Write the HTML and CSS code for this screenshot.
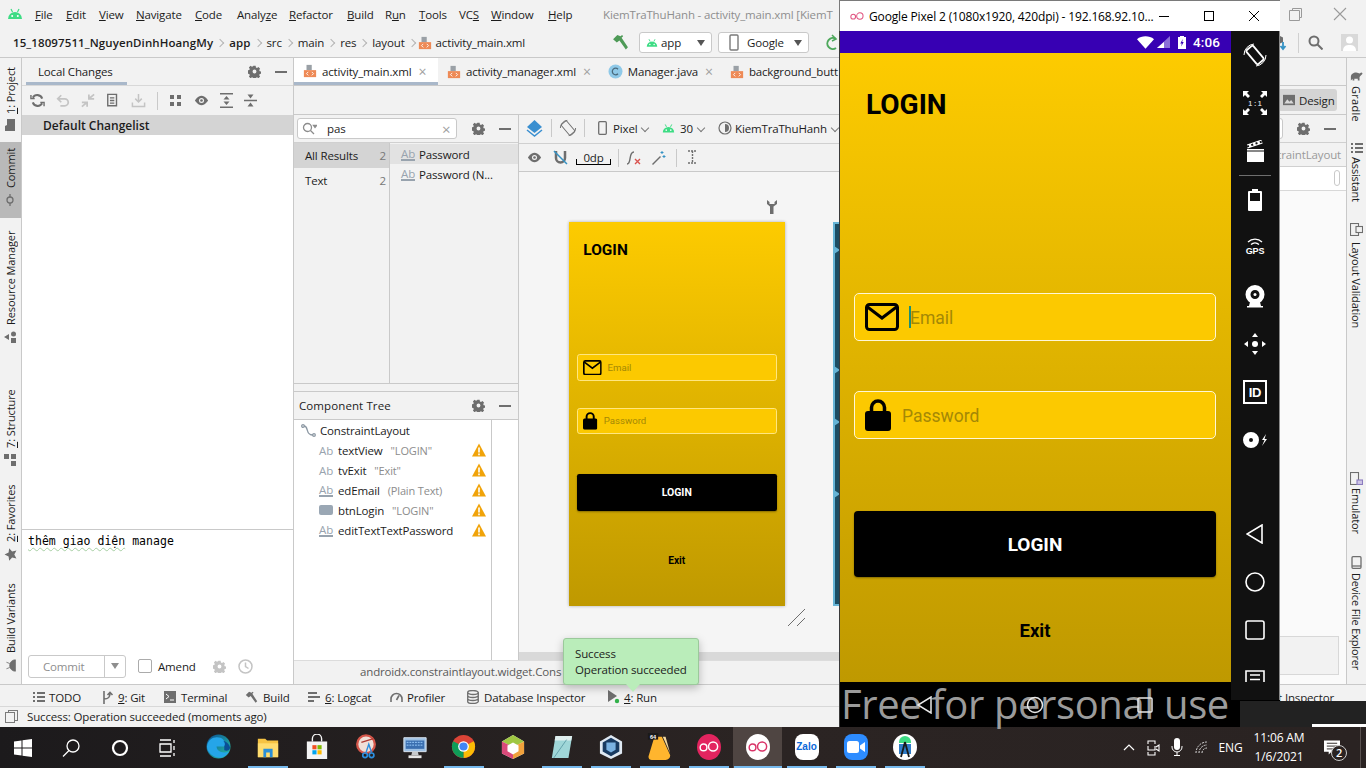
FILE: index.html
```html
<!DOCTYPE html>
<html lang="en">

<head>
    <meta charset="UTF-8">
    <meta name="viewport" content="width=device-width, initial-scale=1.0">
    <title>Android Studio with emulator</title>
    <link rel="stylesheet" href="styles.css">
</head>

<body>
    <!-- shared icons -->
    <svg class="defs" aria-hidden="true">
        <symbol id="i-gear" viewBox="0 0 16 16"><path d="M6.600 1h2.800l.4 2 1.300.6 1.800-1.100 2 2-1.100 1.800.6 1.300 2 .4v2.800l-2 .4-.6 1.300 1.100 1.800-2 2-1.800-1.100-1.300.6-.4 2H6.600l-.4-2-1.300-.6-1.800 1.100-2-2 1.100-1.800-.6-1.300-2-.4V6.600l2-.4.6-1.300L1.100 3l2-2 1.800 1.100 1.300-.6zM8 5.600A2.400 2.400 0 1 0 8 10.400 2.400 2.400 0 0 0 8 5.600z" fill-rule="evenodd"/></symbol>
        <symbol id="i-warn" viewBox="0 0 14 14"><path d="M7 .5 14 13.500H0z" fill="#f0a30a"/><path d="M6.200 4.500h1.600v5H6.200zM6.200 10.500h1.600v1.700H6.200z" fill="#fff"/></symbol>
        <symbol id="i-android" viewBox="0 0 16 16"><path d="M1 13a7 7 0 0 1 14 0z" fill="#3ddc84"/><path d="M4 3 5.500 6M12 3l-1.500 3" stroke="#3ddc84" stroke-width="1.200"/><circle cx="5.200" cy="10" r="1" fill="#fff"/><circle cx="10.800" cy="10" r="1" fill="#fff"/></symbol>
        <symbol id="i-xml" viewBox="0 0 16 16"><path d="M4 1h6v6H4z" fill="#9aa0a6"/><path d="M1 7h14v8H1z" fill="#ee8a56"/><path d="M6 9 4 11l2 2M10 9l2 2-2 2" stroke="#fff" fill="none"/></symbol>
        <symbol id="i-mail" viewBox="0 0 34 28"><rect x="1.500" y="1.500" width="31" height="25" rx="3" fill="none" stroke="#000" stroke-width="3"/><path d="M2.500 4 17 15 31.500 4" fill="none" stroke="#000" stroke-width="3"/></symbol>
        <symbol id="i-lock" viewBox="0 0 26 32"><path d="M6.500 13V8.500a6.500 6.500 0 0 1 13 0V13" fill="none" stroke="#000" stroke-width="3.500"/><path d="M3 12h20a3 3 0 0 1 3 3v14a3 3 0 0 1-3 3H3a3 3 0 0 1-3-3V15a3 3 0 0 1 3-3z"/></symbol>
        <symbol id="i-oo" viewBox="0 0 22 12"><circle cx="5" cy="7" r="3.700" fill="none" stroke="currentColor" stroke-width="1.600"/><circle cx="15.500" cy="6" r="5" fill="none" stroke="currentColor" stroke-width="1.600"/></symbol>
    </svg>

    <div class="desktop">
        <div class="ide">
            <header class="menubar">
                <svg class="menu-logo" width="16" height="16"><use href="#i-android"/></svg>
                <span><u>F</u>ile</span>
                <span><u>E</u>dit</span>
                <span><u>V</u>iew</span>
                <span><u>N</u>avigate</span>
                <span><u>C</u>ode</span>
                <span>Analy<u>z</u>e</span>
                <span><u>R</u>efactor</span>
                <span><u>B</u>uild</span>
                <span>R<u>u</u>n</span>
                <span><u>T</u>ools</span>
                <span>VC<u>S</u></span>
                <span><u>W</u>indow</span>
                <span><u>H</u>elp</span>
                <span class="menu-title">KiemTraThuHanh - activity_main.xml [KiemT</span>
                <div class="ide-controls">
                    <svg width="14" height="14" viewBox="0 0 14 14" fill="none" stroke="#9a9a9a"><path d="M3.500 3.500v-2h9v9h-2M.5 3.500h10v10H.5z"/></svg>
                    <svg width="14" height="14" viewBox="0 0 14 14" stroke="#9a9a9a" stroke-width="1.100"><path d="m1 1 12 12M13 1 1 13"/></svg>
                </div>
            </header>

            <nav class="navbar">
                <div class="crumbs">
                    <b>15_18097511_NguyenDinhHoangMy</b><i></i>
                    <b>app</b><i></i>
                    <span>src</span><i></i>
                    <span>main</span><i></i>
                    <span>res</span><i></i>
                    <span>layout</span><i></i>
                    <svg width="14" height="14"><use href="#i-xml"/></svg>
                    <span>activity_main.xml</span>
                </div>
                <div class="run-tools">
                    <svg width="17" height="17" viewBox="0 0 16 16" fill="#4e9a57"><path d="M1 5 5 1l3 1 1.500-1 1 1L9 3.500l6 9-2 2-6-8.500-2.500 2z"/></svg>
                    <div class="combo combo-app">
                        <svg width="12" height="12"><use href="#i-android"/></svg>
                        <span>app</span><i class="caret"></i>
                    </div>
                    <div class="combo combo-device">
                        <svg width="10" height="17" viewBox="0 0 10 17" fill="none" stroke="#7a7a7a" stroke-width="1.400"><rect x="1" y="1" width="8" height="15" rx="1"/></svg>
                        <span>Google</span><i class="caret"></i>
                    </div>
                    <svg width="16" height="18" viewBox="0 0 16 18" fill="none" stroke="#4ea95c" stroke-width="2"><path d="M13 5A5.500 5.500 0 1 0 13 14"/><path d="m9 1 4 4-4 2" stroke-width="1.500"/></svg>
                </div>
                <div class="nav-right">
                    <svg width="16" height="17" viewBox="0 0 16 17"><path d="M7 1 12 3.500V8L7 10.500 2 8V3.500z" fill="#6e6e6e"/><path d="M12 8v6M9.500 12l2.500 3 2.500-3" stroke="#3592c4" stroke-width="1.800" fill="none"/></svg>
                    <i class="nav-sep"></i>
                    <svg width="15" height="15" viewBox="0 0 15 15" fill="none" stroke="#6e6e6e" stroke-width="2"><circle cx="6" cy="6" r="4.500"/><path d="m9.500 9.500 5 5"/></svg>
                    <svg class="avatar" width="17" height="17" viewBox="0 0 17 17"><path fill="#d9d9d9" d="M0 0h17v17H0z"/><circle cx="8.500" cy="6" r="3.500" fill="#fff"/><path d="M2 17c0-5 3-6 6.500-6s6.500 1 6.500 6z" fill="#fff"/></svg>
                </div>
            </nav>

            <div class="workspace">
                <aside class="stripe stripe-left">
                    <div class="stripe-item si-project"><svg width="12" height="12" viewBox="0 0 12 12" fill="#6e6e6e"><path d="M0 1h5l1 2h6v8H0z"/></svg><span><u>1</u>: Project</span></div>
                    <div class="stripe-item si-commit"><svg width="12" height="12" viewBox="0 0 12 12" fill="none" stroke="#6e6e6e" stroke-width="1.300"><circle cx="6" cy="6" r="3"/><path d="M0 6h3M9 6h3"/></svg><span>Commit</span></div>
                    <div class="stripe-item si-resource"><svg width="12" height="12" viewBox="0 0 12 12" fill="#6e6e6e"><path d="M6 0 9 5H3zM0 7h5v5H0z"/><circle cx="9" cy="9.500" r="2.500"/></svg><span>Resource Manager</span></div>
                    <div class="stripe-item si-structure"><svg width="12" height="12" viewBox="0 0 12 12" fill="#6e6e6e"><path d="M0 7h5v5H0zM7 7h5v5H7zM7 0h5v5H7z"/></svg><span><u>7</u>: Structure</span></div>
                    <div class="stripe-item si-favorites"><svg width="13" height="13" viewBox="0 0 24 24" fill="#6e6e6e"><path d="m12 1 3.500 7.500 8 1-6 5.500 1.700 8L12 19l-7.200 4 1.700-8-6-5.500 8-1z"/></svg><span><u>2</u>: Favorites</span></div>
                    <div class="stripe-item si-variants"><svg width="13" height="13" viewBox="0 0 16 16" fill="#6e6e6e"><path d="M1 14a7 7 0 0 1 14 0zM4 3l1.500 4M12 3l-1.500 4" stroke="#6e6e6e"/></svg><span>Build Variants</span></div>
                </aside>

                <section class="commit-panel">
                    <div class="panel-head">
                        <div class="panel-tab">Local Changes</div>
                        <svg class="gear" width="13" height="13"><use href="#i-gear"/></svg>
                        <i class="minus"></i>
                    </div>
                    <div class="commit-tools">
                        <svg width="15" height="15" viewBox="0 0 16 16" fill="none" stroke="#6e6e6e" stroke-width="2.200"><path d="M13 6a5.500 5.500 0 0 0-10-1M3 10a5.500 5.500 0 0 0 10 1"/><path d="M1 2v4h4M15 14v-4h-4" stroke-width="1.500"/></svg>
                        <svg width="14" height="15" viewBox="0 0 16 16" fill="none" stroke="#c4c4c4" stroke-width="2"><path d="M3 6h7a4 4 0 0 1 0 8H5M6 2 2 6l4 4"/></svg>
                        <svg width="14" height="15" viewBox="0 0 16 16" fill="none" stroke="#c4c4c4" stroke-width="2"><path d="M1 10h6v5M15 6H9V1M1 15l6-5M15 1 9 6"/></svg>
                        <svg width="14" height="15" viewBox="0 0 16 16" fill="none" stroke="#6e6e6e" stroke-width="1.600"><path d="M2 1h10v13H2zM4.500 5h5M4.500 8h5M4.500 11h5"/></svg>
                        <svg width="15" height="15" viewBox="0 0 16 16" fill="none" stroke="#c4c4c4" stroke-width="1.600"><path d="M8 1v8M4.500 6 8 9.500 11.500 6M1.500 10v4.500h13V10"/></svg>
                        <i class="tool-sep"></i>
                        <svg width="14" height="14" viewBox="0 0 14 14" fill="#6e6e6e"><path d="M1 1h4v4H1zM8 1h4v4H8zM1 8h4v4H1zM8 8h4v4H8z"/></svg>
                        <svg width="15" height="15" viewBox="0 0 16 16" fill="#6e6e6e"><path d="M1 8s3-5 7-5 7 5 7 5-3 5-7 5-7-5-7-5z"/><circle cx="8" cy="8" r="2.700" fill="#f2f2f2"/><circle cx="8" cy="8" r="1.400"/></svg>
                        <svg width="13" height="15" viewBox="0 0 13 15" fill="#6e6e6e"><path d="M0 0h13v1.500H0zM0 13.500h13V15H0zM6.500 3 9.500 6.500h-6zM6.500 12l-3-3.500h6z"/></svg>
                        <svg width="13" height="15" viewBox="0 0 13 15" fill="#6e6e6e"><path d="M0 6.800h13v1.500H0zM6.500 5.500l-3-4h6zM6.500 9.500l3 4h-6z"/></svg>
                    </div>
                    <div class="changelist">Default Changelist</div>
                    <div class="changes-empty"></div>
                    <div class="commit-message"><span>thêm giao diện</span> manage</div>
                    <div class="commit-actions">
                        <div class="commit-button"><span>Commit</span><div class="commit-drop"><i class="caret"></i></div></div>
                        <label class="amend"><i></i>Amend</label>
                        <svg class="gear-light" width="13" height="13"><use href="#i-gear"/></svg>
                        <svg width="15" height="15" viewBox="0 0 15 15" fill="none" stroke="#c4c4c4" stroke-width="1.500"><circle cx="7.500" cy="7.500" r="6.500"/><path d="M7.500 3.500v4l3 2"/></svg>
                    </div>
                </section>

                <section class="editor">
                    <div class="file-tabs">
                        <div class="file-tab active"><svg width="14" height="14"><use href="#i-xml"/></svg><span>activity_main.xml</span><em>×</em></div>
                        <div class="file-tab"><svg width="14" height="14"><use href="#i-xml"/></svg><span>activity_manager.xml</span><em>×</em></div>
                        <div class="file-tab"><svg width="15" height="15" viewBox="0 0 15 15"><circle cx="7.500" cy="7.500" r="7" fill="#8fc9e8"/><path d="M10 5.200a3.300 3.300 0 1 0 0 4.600" fill="none" stroke="#4a6a7c" stroke-width="1.300"/></svg><span>Manager.java</span><em>×</em></div>
                        <div class="file-tab"><svg width="14" height="14"><use href="#i-xml"/></svg><span>background_butt</span></div>
                    </div>
                    <div class="mode-bar">
                        <div class="mode-button"><svg width="12" height="12" viewBox="0 0 14 12"><path d="M0 0h14v12H0z" fill="#6e6e6e"/><path d="m1.500 10 3.500-5 2.500 3 2-2 3 4z" fill="#d8d8d8"/></svg>Design</div>
                    </div>

                    <div class="editor-body">
                        <div class="editor-left">
                            <div class="editor-split">
                                <div class="side-pane">
                                    <div class="palette">
                                        <div class="palette-search">
                                            <div class="search-box">
                                                <svg width="15" height="13" viewBox="0 0 15 13" fill="none" stroke="#8c8c8c" stroke-width="1.300"><circle cx="5.500" cy="5.500" r="4"/><path d="m8.500 8.500 3.500 3.500M11.500 3.500h3l-1.500 2z"/></svg>
                                                <span>pas</span>
                                                <em>×</em>
                                            </div>
                                            <svg class="gear" width="13" height="13"><use href="#i-gear"/></svg>
                                            <i class="minus"></i>
                                        </div>
                                        <div class="palette-lists">
                                            <ul class="palette-groups">
                                                <li class="current"><span>All Results</span><b>2</b></li>
                                                <li><span>Text</span><b>2</b></li>
                                            </ul>
                                            <ul class="palette-items">
                                                <li class="current"><i class="ab ab-line">Ab</i>Password</li>
                                                <li><i class="ab ab-line">Ab</i>Password (N...</li>
                                            </ul>
                                        </div>
                                    </div>
                                    <div class="split-bar"></div>
                                    <div class="tree-head">
                                        <span>Component Tree</span>
                                        <svg class="gear" width="13" height="13"><use href="#i-gear"/></svg>
                                        <i class="minus"></i>
                                    </div>
                                    <div class="tree">
                                        <ul class="tree-list">
                                            <li class="tree-root"><svg width="15" height="15" viewBox="0 0 15 15" fill="none" stroke="#8c98a3" stroke-width="1.300"><circle cx="2" cy="3" r="1.300"/><circle cx="13" cy="12" r="1.300"/><path d="M3 3c5 0 1 9 9 9"/></svg>ConstraintLayout</li>
                                            <li><i class="ab">Ab</i><span>textView</span><small>"LOGIN"</small><svg width="14" height="14"><use href="#i-warn"/></svg></li>
                                            <li><i class="ab">Ab</i><span>tvExit</span><small>"Exit"</small><svg width="14" height="14"><use href="#i-warn"/></svg></li>
                                            <li><i class="ab ab-line">Ab</i><span>edEmail</span><small>(Plain Text)</small><svg width="14" height="14"><use href="#i-warn"/></svg></li>
                                            <li><i class="btn-chip"></i><span>btnLogin</span><small>"LOGIN"</small><svg width="14" height="14"><use href="#i-warn"/></svg></li>
                                            <li><i class="ab ab-line">Ab</i><span>editTextTextPassword</span><svg width="14" height="14"><use href="#i-warn"/></svg></li>
                                        </ul>
                                        <div class="tree-gutter"></div>
                                    </div>
                                </div>

                                <div class="design-main">
                                    <div class="design-tools first">
                                        <svg width="17" height="19" viewBox="0 0 17 19"><path d="M8.500 1 16 8l-7.500 6L1 8z" fill="#3a8fd0"/><path d="m1 11 7.500 6 7.500-6" fill="none" stroke="#3a8fd0" stroke-width="1.500"/></svg>
                                        <i class="tool-sep"></i>
                                        <svg width="18" height="18" viewBox="0 0 26 26" fill="none" stroke="#6e6e6e" stroke-width="1.400"><rect x="8" y="3" width="10" height="20" rx="1.500" transform="rotate(-40 13 13)"/><path d="M2 13A11 11 0 0 1 12 2M24 13a11 11 0 0 1-10 11"/></svg>
                                        <i class="tool-sep"></i>
                                        <svg width="9" height="14" viewBox="0 0 9 14" fill="none" stroke="#6e6e6e" stroke-width="1.300"><rect x=".7" y=".7" width="7.600" height="12.600" rx="1"/></svg>
                                        <span>Pixel<i class="chev"></i></span>
                                        <svg width="13" height="13"><use href="#i-android"/></svg>
                                        <span>30<i class="chev"></i></span>
                                        <svg width="14" height="14" viewBox="0 0 14 14"><circle cx="7" cy="7" r="6" fill="none" stroke="#6e6e6e" stroke-width="1.200"/><path d="M7 3a4 4 0 0 1 0 8z" fill="#6e6e6e"/></svg>
                                        <span>KiemTraThuHanh<i class="chev"></i></span>
                                    </div>
                                    <div class="design-tools second">
                                        <svg width="15" height="15" viewBox="0 0 16 16" fill="#6e6e6e"><path d="M1 8s3-5 7-5 7 5 7 5-3 5-7 5-7-5-7-5z"/><circle cx="8" cy="8" r="2.700" fill="#f2f2f2"/><circle cx="8" cy="8" r="1.400"/></svg>
                                        <svg width="15" height="15" viewBox="0 0 15 15"><path d="M3 1v7a4.500 4.500 0 0 0 9 0V1" fill="none" stroke="#6e6e6e" stroke-width="2.500"/><path d="m1 1 13 13" stroke="#3592c4" stroke-width="1.500"/></svg>
                                        <span class="margin-box">0dp</span>
                                        <i class="tool-sep"></i>
                                        <svg width="16" height="16" viewBox="0 0 16 16" fill="none" stroke="#6e6e6e" stroke-width="1.400"><path d="M1 14c5 0 1-12 7-12"/><path d="m9 9 5 5M14 9l-5 5" stroke="#d9534f"/></svg>
                                        <svg width="15" height="15" viewBox="0 0 15 15"><path d="m1 14 8-8 1 1-8 8z" fill="#6e6e6e"/><path d="M11 1v3M9.500 2.500h3M13 5v3M11.500 6.500h3" stroke="#3592c4"/></svg>
                                        <i class="tool-sep"></i>
                                        <svg width="13" height="15" viewBox="0 0 13 15" fill="none" stroke="#6e6e6e" stroke-width="1.400"><path d="M2 1h9M2 13h9M6.500 1v12" stroke-dasharray="2 1"/></svg>
                                    </div>

                                    <div class="canvas">
                                        <div class="preview">
                                            <svg class="wrench" width="10" height="14" viewBox="0 0 10 14" fill="#6e6e6e"><path d="M0 0v4l3 2.500V14h3.500V6.500L10 4V0L7.500 2v2h-5V2z"/></svg>
                                            <div class="login-screen mini">
                                                <div class="login-title">LOGIN</div>
                                                <div class="login-field first"><svg class="mail"><use href="#i-mail"/></svg><span>Email</span></div>
                                                <div class="login-field second"><svg class="lock"><use href="#i-lock"/></svg><span>Password</span></div>
                                                <div class="login-button">LOGIN</div>
                                                <div class="login-exit">Exit</div>
                                            </div>
                                            <svg class="resize-grip" width="18" height="18" viewBox="0 0 18 18" stroke="#6e6e6e"><path d="M0 17 17 0M9 17l8-8"/></svg>
                                        </div>
                                        <div class="blueprint">
                                            <i class="bp-arrow a1"></i><i class="bp-arrow a2"></i><i class="bp-arrow a3"></i><i class="bp-arrow a4"></i>
                                        </div>
                                    </div>
                                    <div class="canvas-scroll"></div>
                                </div>
                            </div>
                            <div class="design-status">androidx.constraintlayout.widget.Cons</div>
                        </div>

                        <aside class="attributes">
                            <div class="attr-search">
                                <div class="attr-input"></div>
                                <svg class="gear" width="13" height="13"><use href="#i-gear"/></svg>
                                <i class="minus"></i>
                            </div>
                            <div class="attr-title">traintLayout</div>
                            <div class="attr-row"><i class="attr-scroll"></i></div>
                            <div class="attr-body"><div class="attr-card"></div></div>
                        </aside>
                    </div>
                </section>

                <aside class="stripe stripe-right">
                    <div class="stripe-item sr-gradle"><svg width="13" height="15" viewBox="0 0 15 13" fill="#6e6e6e"><path d="M1 11V7c0-3 3-5 6-5 2 0 3 1 4 1s1-1 2-1 2 1 1 2-2 2-3 3v4H9V9H5v2H3V9z"/></svg><span>Gradle</span></div>
                    <div class="stripe-item sr-assistant"><svg width="12" height="12" viewBox="0 0 12 12" fill="#6e6e6e"><path d="M0 1h2v2H0zM4 1h8v2H4zM0 5h2v2H0zM4 5h8v2H4zM0 9h2v2H0zM4 9h8v2H4z"/></svg><span>Assistant</span></div>
                    <div class="stripe-item sr-validation"><svg width="13" height="13" viewBox="0 0 13 13" fill="none" stroke="#6e6e6e" stroke-width="1.100"><rect x=".5" y=".5" width="8" height="12"/><rect x="6" y="3.500" width="6.500" height="6" fill="#f2f2f2"/></svg><span>Layout Validation</span></div>
                    <div class="stripe-item sr-emulator"><svg width="13" height="13" viewBox="0 0 13 13" fill="none" stroke="#6e6e6e" stroke-width="1.100"><rect x=".5" y=".5" width="8" height="12"/><rect x="7" y="8" width="5.500" height="4.500" fill="#cfc6e6" stroke="#8b7cc0"/></svg><span>Emulator</span></div>
                    <div class="stripe-item sr-device"><svg width="13" height="13" viewBox="0 0 13 13" fill="none" stroke="#6e6e6e" stroke-width="1.300"><rect x="2" y=".7" width="9" height="11.600" rx="1"/><path d="M2 10h9"/></svg><span>Device File Explorer</span></div>
                </aside>
            </div>

            <div class="tool-windows">
                <div class="tw tw-todo"><svg width="12" height="11" viewBox="0 0 12 11" fill="#6e6e6e"><path d="M0 0h2v2H0zM4 0h8v2H4zM0 4h2v2H0zM4 4h8v2H4zM0 8h2v2H0zM4 8h8v2H4z"/></svg><span>TODO</span></div>
                <div class="tw tw-git"><svg width="12" height="13" viewBox="0 0 12 13" fill="none" stroke="#6e6e6e" stroke-width="1.600"><path d="M2 0v13M2 8c5 0 6-2 6-6M5.500 4 8 1.500 10.500 4"/></svg><span><u>9</u>: Git</span></div>
                <div class="tw tw-term"><svg width="12" height="12" viewBox="0 0 12 12"><path d="M0 0h12v12H0z" fill="#6e6e6e"/><path d="m2 3 3 2.500L2 8M6 9h4" stroke="#fff" fill="none"/></svg><span>Terminal</span></div>
                <div class="tw tw-build"><svg width="13" height="13" viewBox="0 0 16 16" fill="#6e6e6e"><path d="M1 5 5 1l3 1 1.500-1 1 1L9 3.500l6 9-2 2-6-8.500-2.500 2z"/></svg><span>Build</span></div>
                <div class="tw tw-logcat"><svg width="12" height="11" viewBox="0 0 12 11" fill="#6e6e6e"><path d="M0 0h9v2H0zM0 4h12v2H0zM0 8h6v2H0z"/></svg><span><u>6</u>: Logcat</span></div>
                <div class="tw tw-profiler"><svg width="13" height="10" viewBox="0 0 13 10" fill="none" stroke="#6e6e6e" stroke-width="1.600"><path d="M1 10V7a5.500 5.500 0 0 1 11 0v3M6.500 8 9 3.500"/></svg><span>Profiler</span></div>
                <div class="tw tw-db"><svg width="12" height="14" viewBox="0 0 12 14" fill="none" stroke="#6e6e6e" stroke-width="1.300"><ellipse cx="6" cy="2.500" rx="5.300" ry="2"/><path d="M.7 2.500v9c0 1 2.400 2 5.300 2s5.300-1 5.300-2v-9M.7 5.500c0 1 2.400 2 5.300 2s5.300-1 5.300-2M.7 8.500c0 1 2.400 2 5.300 2s5.300-1 5.300-2"/></svg><span>Database Inspector</span></div>
                <div class="tw tw-run"><svg width="12" height="14" viewBox="0 0 12 14"><path d="M0 0 9 6 0 12z" fill="#6e6e6e"/><circle cx="9" cy="11" r="2.200" fill="#32b14a"/></svg><span><u>4</u>: Run</span></div>
                <div class="tw tw-layout">t Inspector</div>
            </div>
            <footer class="statusbar">
                <svg width="13" height="13" viewBox="0 0 13 13" fill="#f2f2f2" stroke="#7a7a7a"><rect x="3.500" y=".5" width="9" height="10"/><rect x=".5" y="2.500" width="9" height="10"/></svg>
                <span>Success: Operation succeeded (moments ago)</span>
            </footer>
        </div>

        <!-- emulator floats over the IDE -->
        <div class="emulator">
            <div class="emu-titlebar">
                <svg class="emu-logo" width="14" height="8"><use href="#i-oo"/></svg>
                <span class="emu-title">Google Pixel 2 (1080x1920, 420dpi) - 192.168.92.10...</span>
                <div class="emu-controls">
                    <svg width="10" height="10" viewBox="0 0 10 10" stroke="#000"><path d="M0 5.500h10"/></svg>
                    <svg width="10" height="10" viewBox="0 0 10 10" fill="none" stroke="#000"><rect x=".5" y=".5" width="9" height="9"/></svg>
                    <svg width="10" height="10" viewBox="0 0 10 10" stroke="#000"><path d="m0 0 10 10M10 0 0 10"/></svg>
                </div>
            </div>
            <div class="emu-body">
                <div class="phone">
                    <div class="phone-status">
                        <svg width="17" height="13" viewBox="0 0 18 13" fill="#fff"><path d="M0 3c5-4 13-4 18 0L9 13z"/></svg>
                        <svg class="ps-signal" width="13" height="12" viewBox="0 0 13 12"><path d="M13 0v12H0z" fill="#8b6fd8"/><path d="M7 6v6H0z" fill="#fff"/></svg>
                        <svg class="ps-batt" width="8" height="13" viewBox="0 0 8 13"><path d="M2 0h4v1h2v12H0V1h2z" fill="#fff"/><path d="m4.800 3-2.500 4.500h1.500L3.200 10.500 5.700 6H4.200z" fill="#3700b3"/></svg>
                        <span>4:06</span>
                    </div>
                    <div class="login-screen large">
                        <div class="login-title">LOGIN</div>
                        <div class="login-field first"><svg class="mail"><use href="#i-mail"/></svg><i class="cursor"></i><span>Email</span></div>
                        <div class="login-field second"><svg class="lock"><use href="#i-lock"/></svg><span>Password</span></div>
                        <div class="login-button">LOGIN</div>
                        <div class="login-exit">Exit</div>
                    </div>
                    <div class="phone-nav">
                        <span class="watermark">Free for personal use</span>
                        <div class="nav-keys">
                            <svg width="18" height="18" viewBox="0 0 18 18" fill="none" stroke="#e8e8e8" stroke-width="1.500"><path d="M15 1v16L2 9z"/></svg>
                            <svg width="18" height="18" viewBox="0 0 18 18" fill="none" stroke="#e8e8e8" stroke-width="1.500"><circle cx="9" cy="9" r="7.500"/></svg>
                            <svg width="18" height="18" viewBox="0 0 18 18" fill="none" stroke="#e8e8e8" stroke-width="1.500"><rect x="2" y="2" width="14" height="14" rx="1"/></svg>
                        </div>
                    </div>
                </div>
                <div class="emu-side">
                    <div class="side-btn"><svg width="26" height="26" viewBox="0 0 26 26" fill="none" stroke="#fff"><rect x="8.500" y="4" width="9" height="18" rx="1.500" stroke-width="1.800" transform="rotate(-40 13 13)"/><path d="M2 13A11 11 0 0 1 12 2M24 13a11 11 0 0 1-10 11"/></svg></div>
                    <div class="side-btn"><svg width="26" height="26" viewBox="0 0 26 26" fill="#fff"><path d="M1 1h6l-2 2 3 3-2 2-3-3-2 2zM25 1v6l-2-2-3 3-2-2 3-3-2-2zM1 25v-6l2 2 3-3 2 2-3 3 2 2zM25 25h-6l2-2-3-3 2-2 3 3 2-2z"/><text x="13" y="16" text-anchor="middle" font-size="7" font-weight="700" fill="#cfcfcf" font-family="Liberation Sans">1 : 1</text></svg></div>
                    <div class="side-btn"><svg width="17" height="22" viewBox="0 0 17 22"><path d="M0 9h17v13H0z" fill="#fff"/><path d="M0 11h17" stroke="#111"/><path d="m0 6.500 15-5" stroke="#fff" stroke-width="4"/><path d="m0 6.500 15-5" stroke="#111" stroke-width="2" stroke-dasharray="2 2.500"/></svg></div>
                    <div class="side-divider"></div>
                    <div class="side-btn"><svg width="14" height="22" viewBox="0 0 14 22"><path d="M4 0h6v2h3a1 1 0 0 1 1 1v18a1 1 0 0 1-1 1H1a1 1 0 0 1-1-1V3a1 1 0 0 1 1-1h3z" fill="#fff"/><path d="M2 4h10v8H2z" fill="#111"/></svg></div>
                    <div class="side-btn side-gps"><svg width="24" height="20" viewBox="0 0 24 20" fill="none" stroke="#fff" stroke-width="1.300"><path d="M5 5a10 10 0 0 1 14 0M8 7.500a6 6 0 0 1 8 0"/><text x="12" y="17" text-anchor="middle" font-size="9" font-weight="700" fill="#fff" stroke="none" font-family="Liberation Sans">GPS</text></svg></div>
                    <div class="side-btn"><svg width="22" height="24" viewBox="0 0 22 24" fill="#fff"><path fill-rule="evenodd" d="M11 1a9.500 9.500 0 1 1 0 19 9.500 9.500 0 0 1 0-19zm0 5a4.500 4.500 0 1 0 0 9 4.500 4.500 0 0 0 0-9z"/><circle cx="11" cy="10.500" r="1.500"/><path d="M6 18h10l1 4H5z"/><path d="M3 22h16v1.500H3z"/></svg></div>
                    <div class="side-btn"><svg width="24" height="24" viewBox="0 0 24 24" fill="#fff"><circle cx="12" cy="12" r="3"/><path d="m12 1 3 4H9zM12 23l-3-4h6zM1 12l4-3v6zM23 12l-4 3V9z"/></svg></div>
                    <div class="side-btn"><svg width="24" height="24" viewBox="0 0 24 24"><rect x="1" y="1" width="22" height="22" fill="none" stroke="#fff" stroke-width="2"/><text x="12" y="17" text-anchor="middle" font-size="13" font-weight="700" fill="#fff" font-family="Liberation Sans">ID</text></svg></div>
                    <div class="side-btn"><svg width="24" height="16" viewBox="0 0 24 16" fill="#fff"><path fill-rule="evenodd" d="M8 0a8 8 0 1 1 0 16A8 8 0 0 1 8 0zm0 6a2 2 0 1 0 0 4 2 2 0 0 0 0-4z"/><path d="m23 2-4 6h2.500L19 14l5-7h-2.500z"/></svg></div>
                    <div class="side-gap"></div>
                    <div class="side-btn"><svg width="18" height="20" viewBox="0 0 18 20" fill="none" stroke="#fff" stroke-width="1.600"><path d="M16 1v18L1 10z"/></svg></div>
                    <div class="side-btn"><svg width="20" height="20" viewBox="0 0 20 20" fill="none" stroke="#fff" stroke-width="1.600"><circle cx="10" cy="10" r="9"/></svg></div>
                    <div class="side-btn"><svg width="20" height="20" viewBox="0 0 20 20" fill="none" stroke="#fff" stroke-width="1.600"><rect x="1" y="1" width="18" height="18" rx="2"/></svg></div>
                    <div class="side-btn side-last"><svg width="20" height="12" viewBox="0 0 20 12" fill="none" stroke="#fff" stroke-width="1.600"><path d="M1 12V1h18v11M5 5h10M5 9.500h10"/></svg></div>
                </div>
            </div>
        </div>

        <div class="dark-popup"><i></i></div>

        <div class="balloon">
            <div>Success</div>
            <div>Operation succeeded</div>
        </div>

        <div class="taskbar">
            <div class="task-left">
                <svg width="18" height="18" viewBox="0 0 18 18" fill="#fff"><path d="m0 2.500 7.500-1v7H0zM8.500 1.300 18 0v8.500H8.500zM0 9.500h7.500v7l-7.500-1zM8.500 9.500H18V18l-9.500-1.300z"/></svg>
                <svg width="18" height="18" viewBox="0 0 18 18" fill="none" stroke="#fff" stroke-width="1.300"><circle cx="11" cy="7" r="6"/><path d="m7 11.500-6 6"/></svg>
                <svg width="18" height="18" viewBox="0 0 18 18" fill="none" stroke="#fff" stroke-width="2.200"><circle cx="9" cy="9" r="7"/></svg>
                <svg width="18" height="18" viewBox="0 0 18 18" fill="none" stroke="#fff" stroke-width="1.300"><path d="M1 1h11M1 17h11M1 5h11v8H1zM15 1v3M15 7v4M15 14v3"/></svg>
            </div>
            <div class="task-apps">
                <div class="app"><svg width="25" height="25" viewBox="0 0 26 26"><defs><linearGradient id="edge" x1="0" y1="0" x2="1" y2="1"><stop offset="0" stop-color="#0a4f96"/><stop offset="1" stop-color="#27c2a0"/></linearGradient></defs><circle cx="13" cy="13" r="12.500" fill="url(#edge)"/><path d="M1 13C2 5 9 2 15 4c5 2 6 7 4 9h-8c0 5 7 8 13 5-3 6-9 8-14 6S1 18 1 13z" fill="#25a5e8"/><path d="M19 13c1-2 1-4-1-6 4 1 7 5 7 7 0 3-3 4-6 3z" fill="#0a4f96"/></svg></div>
                <div class="app running"><svg width="24" height="24" viewBox="0 0 26 26"><path d="M2 4h8l2 2h12v18H2z" fill="#f6c343"/><path d="M2 9h22v15H2z" fill="#ffdc6e"/><path d="M8 15h10v9h-3v-5h-4v5H8z" fill="#2a8fd8"/></svg></div>
                <div class="app"><svg width="24" height="26" viewBox="0 0 26 28"><path d="M2 8h22v19H2z" fill="#f4f4f4"/><path d="M8 8V5a5 5 0 0 1 10 0v3" fill="none" stroke="#f4f4f4" stroke-width="1.500"/><path d="M8 12h4.500v4.500H8z" fill="#f25022"/><path d="M13.500 12H18v4.500h-4.500z" fill="#7fba00"/><path d="M8 17.500h4.500V22H8z" fill="#00a4ef"/><path d="M13.500 17.500H18V22h-4.500z" fill="#ffb900"/></svg></div>
                <div class="app"><svg width="26" height="26" viewBox="0 0 28 28"><circle cx="14" cy="11" r="9.500" fill="#f0e0d8" stroke="#d4564a" stroke-width="2.500"/><path d="M9 9 22 5" stroke="#b03a32" stroke-width="1.500"/><circle cx="13" cy="23" r="2.500" fill="none" stroke="#2b8fe0" stroke-width="1.800"/><circle cx="20" cy="23" r="2.500" fill="none" stroke="#2b8fe0" stroke-width="1.800"/><path d="m14 20 3-9 3 9" fill="none" stroke="#2b8fe0" stroke-width="1.500"/></svg></div>
                <div class="app"><svg width="26" height="26" viewBox="0 0 28 28"><path d="M2 4h24v15H2z" fill="#9ec1e4" stroke="#dfe8f2"/><path d="M4 7h20v9H4z" fill="#3b6fb0"/><path d="M5 9h18M5 12h18" stroke="#9fd0ff" stroke-dasharray="2 1"/><path d="M11 19h6l1 4h-8z" fill="#c7c9cc"/><path d="M7 23h14v3H7z" fill="#e5e5e5"/></svg></div>
                <div class="app running"><svg width="25" height="25" viewBox="0 0 28 28"><circle cx="14" cy="14" r="13" fill="#db4437"/><path d="M14 14 25.500 8A13 13 0 0 1 14 27z" fill="#fbbc05"/><path d="M14 14 14 27A13 13 0 0 1 2.500 8z" fill="#0f9d58"/><circle cx="14" cy="14" r="6" fill="#fff"/><circle cx="14" cy="14" r="4.600" fill="#4285f4"/></svg></div>
                <div class="app"><svg width="24" height="26" viewBox="0 0 26 28"><path d="M13 1 25 8v13l-12 6-12-6V8z" fill="#e8e8e8"/><path d="M13 1 25 8 13 14 1 8z" fill="#9fc743"/><path d="m1 8 12 6v13L1 21z" fill="#d94a7a"/><path d="m25 8-12 6v13l12-6z" fill="#f0a13c"/><path d="M13 9 19 12.500v6L13 22l-6-3.500v-6z" fill="#fff"/></svg></div>
                <div class="app running"><svg width="24" height="26" viewBox="0 0 26 28"><path d="M6 2h18l-4 24H2z" fill="#9fd6d8"/><path d="M6 2h18l-1 5H5z" fill="#dfeeee"/><path d="m4 26 14-20" stroke="#5f9ea8"/></svg></div>
                <div class="app running"><svg width="24" height="26" viewBox="0 0 26 28"><path d="M13 1 25 8v13l-12 6-12-6V8z" fill="#dfe9f3"/><path d="M13 4 22 9v10l-9 5-9-5V9z" fill="#183a61"/><path d="M8 9h10v8l-5 3-5-3z" fill="#7ab2e2"/></svg></div>
                <div class="app running"><svg width="26" height="28" viewBox="0 0 28 30"><path d="M8 4h8l9 20c0 3-2 5-5 5H5c-3 0-4-3-3-5z" fill="#ffb52e"/><path d="M17 4h3l5 18z" fill="#f4d9a0"/><path d="M1 0h11v7H1z" fill="#1a1a1a"/><text x="6.500" y="6" text-anchor="middle" font-size="6" font-weight="700" fill="#fff" font-family="Liberation Sans">64</text></svg></div>
                <div class="app running"><span class="oo-badge pink"><svg width="20" height="11"><use href="#i-oo"/></svg></span></div>
                <div class="app running current"><span class="oo-badge white"><svg width="20" height="11"><use href="#i-oo"/></svg></span></div>
                <div class="app running"><span class="zalo"><b>Zalo</b></span></div>
                <div class="app running"><span class="zoom"><svg width="18" height="12" viewBox="0 0 18 12" fill="#fff"><rect width="12" height="12" rx="2.500"/><path d="m13 4.500 5-3.500v10l-5-3.500z"/></svg></span></div>
                <div class="app running"><span class="studio"><svg width="18" height="22" viewBox="0 0 18 22"><path d="M3 6a6 6 0 0 1 12 0v1H3z" fill="#3ddc84"/><path d="M3 8h12v10H3z" fill="#2f7cc7"/><path d="m9 6-4 15M9 6l4 15" stroke="#1a1a1a" stroke-width="1.800"/></svg></span></div>
            </div>
            <div class="tray">
                <svg width="12" height="7" viewBox="0 0 12 7" fill="none" stroke="#fff" stroke-width="1.200"><path d="m1 6 5-5 5 5"/></svg>
                <svg width="13" height="18" viewBox="0 0 13 18" fill="none" stroke="#fff" stroke-width="1.100"><path d="M1 5V2h7v3M1 13v3h7v-3M1 7v4h7V7M9 8l3-2v6l-3-2"/></svg>
                <svg width="12" height="19" viewBox="0 0 12 19" fill="#fff"><rect x="3" width="6" height="12" rx="3"/><path d="M1 8v1a5 5 0 0 0 10 0V8M6 14v3M3 17.500h6" stroke="#fff" fill="none"/></svg>
                <svg width="14" height="14" viewBox="0 0 14 14" fill="none" stroke="#dcdcdc" stroke-dasharray="2 1"><path d="M1 12A11 11 0 0 1 12 1M4 12a8 8 0 0 1 8-8M7 12a5 5 0 0 1 5-5"/></svg>
                <span class="tray-lang">ENG</span>
                <div class="clock"><span>11:06 AM</span><span>1/6/2021</span></div>
                <div class="notify">
                    <svg width="16" height="15" viewBox="0 0 17 15" fill="#fff"><path d="M0 0h17v12H8l-3 3v-3H0z"/><path d="M3 3h11M3 6h11M3 9h7" stroke="#2a2422"/></svg>
                    <b>2</b>
                </div>
            </div>
        </div>
    </div>
</body>

</html>
```

FILE: styles.css
```css
* {
    box-sizing: border-box;
}

body {
    margin: 0;
    font-family: "Open Sans", "Noto Sans", sans-serif;
    font-size: 11.5px;
    letter-spacing: -0.15px;
    color: #1c1c1c;
}

i, em {
    font-style: normal;
}

ul {
    margin: 0;
    padding: 0;
    list-style: none;
}

svg {
    flex: none;
    display: block;
}

.defs {
    position: absolute;
    width: 0;
    height: 0;
}

.desktop {
    position: relative;
    width: 1366px;
    height: 768px;
    overflow: hidden;
    display: flex;
    flex-direction: column;
    background: #000;
}

.ide {
    height: 727px;
    display: flex;
    flex-direction: column;
    background: #f2f2f2;
}

/* menu */
.menubar {
    height: 28px;
    flex: none;
    display: grid;
    grid-template-columns: 35px 31px 33px 37px 59px 42px 52px 58px 38px 34px 40px 32px 57px 55px 1fr auto;
    align-items: center;
}

.menu-logo {
    margin-left: 7px;
}

.menu-title {
    color: #8e8e8e;
    white-space: nowrap;
}

.ide-controls {
    display: flex;
    gap: 30px;
    padding-right: 19px;
}

.navbar {
    height: 30px;
    flex: none;
    display: flex;
    align-items: center;
    border-bottom: 1px solid #c9c9c9;
}

.crumbs {
    width: 612px;
    padding-left: 13px;
    display: flex;
    align-items: center;
    gap: 4px;
    white-space: nowrap;
}

.crumbs b {
    font-weight: 600;
    letter-spacing: 0.1px;
}

.crumbs i {
    width: 6px;
    height: 6px;
    margin-right: 2px;
    border: solid #b4b4b4;
    border-width: 1px 1px 0 0;
    transform: rotate(45deg);
}

.crumbs svg {
    margin-left: -3px;
}

.run-tools {
    width: 228px;
    display: flex;
    align-items: center;
    gap: 6px;
}

.combo {
    height: 21px;
    display: flex;
    align-items: center;
    gap: 3px;
    padding: 0 6px;
    background: #fff;
    border: 1px solid #c9c9c9;
    border-radius: 3px;
}

.combo-app {
    width: 73px;
    margin-left: 4px;
}

.combo-device {
    width: 91px;
    gap: 8px;
    padding-left: 10px;
    margin-right: 8px;
}

.caret {
    display: block;
    margin-left: auto;
    border: 4px solid transparent;
    border-top: 6px solid #555;
    border-bottom: 0;
}

.nav-right {
    margin-left: auto;
    display: flex;
    align-items: center;
    gap: 9px;
    padding-right: 8px;
}

.nav-sep {
    width: 1px;
    height: 20px;
    background: #d0d0d0;
    margin-left: 2px;
}

.avatar {
    margin-left: 9px;
}

/* main row */
.workspace {
    flex: 1;
    min-height: 0;
    display: flex;
    border-bottom: 1px solid #c9c9c9;
}

.stripe {
    flex: none;
    display: flex;
    flex-direction: column;
    font-size: 11px;
}

.stripe-left {
    width: 22px;
    border-right: 1px solid #c9c9c9;
    padding-top: 10px;
}

.stripe-right {
    width: 20px;
    border-left: 1px solid #c9c9c9;
}

.stripe-item {
    display: flex;
    align-items: center;
    writing-mode: vertical-rl;
    white-space: nowrap;
    gap: 6px;
}

.stripe-left .stripe-item {
    transform: rotate(180deg);
    width: 21px;
    padding-top: 2px;
    letter-spacing: -0.1px;
}

.stripe-left .stripe-item svg {
    transform: rotate(90deg);
}

.si-project { height: 65px; gap: 5px; }
.si-resource { height: 114px; margin-top: 13px; }
.si-structure { height: 76px; margin-top: 47px; }
.si-favorites { height: 73px; margin-top: 22px; }
.si-variants { height: 86px; margin-top: 25px; }

.stripe-left .si-commit {
    height: 76px;
    margin-top: 9px;
    padding-top: 12px;
    background: #b9b9b9;
}

.sr-gradle { margin-top: 11px; gap: 2px; letter-spacing: 0.3px; }
.sr-assistant { margin-top: 20px; gap: 3px; }
.sr-validation { margin-top: 21px; }
.sr-emulator { margin-top: 144px; gap: 3px; }
.sr-device { margin-top: 22px; gap: 4px; }

/* commit panel */
.commit-panel {
    width: 272px;
    flex: none;
    display: flex;
    flex-direction: column;
    border-right: 1px solid #c9c9c9;
}

.panel-head {
    height: 27px;
    flex: none;
    display: flex;
    align-items: center;
    gap: 14px;
    padding: 0 6px 0 4px;
}

.panel-tab {
    width: 101px;
    height: 27px;
    margin-right: auto;
    padding: 6px 0 0 12px;
    border-bottom: 3px solid #a9b8ca;
}

.gear {
    fill: #6e6e6e;
}

.gear-light {
    fill: #c4c4c4;
}

.minus {
    width: 12px;
    height: 2px;
    background: #6e6e6e;
}

.commit-tools {
    height: 30px;
    flex: none;
    display: flex;
    align-items: center;
    gap: 11px;
    padding-left: 8px;
    border-top: 1px solid #d8d8d8;
}

.tool-sep {
    display: block;
    width: 1px;
    height: 18px;
    background: #c9c9c9;
}

.changelist {
    height: 20px;
    flex: none;
    padding: 2px 0 0 21px;
    background: #d4d4d4;
    font-size: 12px;
    font-weight: 600;
    letter-spacing: 0;
}

.changes-empty {
    flex: 1;
    background: #fff;
}

.commit-message {
    height: 119px;
    flex: none;
    padding: 4px 0 0 6px;
    background: #fff;
    border-top: 1px solid #c9c9c9;
    font-family: "DejaVu Sans Mono", monospace;
    font-size: 11.500px;
    letter-spacing: 0.02px;
    color: #000;
}

.commit-message span {
    text-decoration: underline wavy #a7cfa4 1px;
    text-underline-offset: 2px;
}

.commit-actions {
    height: 36px;
    flex: none;
    display: flex;
    align-items: center;
    padding-left: 6px;
    background: #fff;
}

.commit-button {
    width: 98px;
    height: 23px;
    display: flex;
    align-items: center;
    padding-left: 14px;
    border: 1px solid #c9c9c9;
    border-radius: 3px;
    color: #8e8e8e;
}

.commit-drop {
    width: 21px;
    height: 100%;
    margin-left: auto;
    display: flex;
    align-items: center;
    justify-content: center;
    border-left: 1px solid #c9c9c9;
}

.commit-drop .caret {
    margin: 0;
    border-top-color: #8e8e8e;
}

.amend {
    display: flex;
    align-items: center;
    gap: 6px;
    margin-left: 12px;
}

.amend i {
    width: 14px;
    height: 14px;
    background: #fff;
    border: 1px solid #ababab;
    border-radius: 2px;
}

.commit-actions .gear-light {
    margin-left: 17px;
}

.commit-actions svg:last-child {
    margin-left: 12px;
}

/* editor */
.editor {
    flex: 1;
    min-width: 0;
    display: flex;
    flex-direction: column;
}

.file-tabs {
    height: 28px;
    flex: none;
    display: flex;
    border-bottom: 1px solid #c9c9c9;
    white-space: nowrap;
}

.file-tab {
    display: flex;
    align-items: center;
    gap: 5px;
    padding: 0 8px 0 9px;
}

.file-tab em {
    color: #a0a0a0;
    font-size: 14px;
    margin-left: 2px;
}

.file-tab.active {
    width: 144px;
    background: #fff;
    border-bottom: 3px solid #a9b8ca;
    padding-top: 2px;
}

.mode-bar {
    height: 29px;
    flex: none;
    display: flex;
    align-items: center;
    justify-content: flex-end;
    padding-right: 9px;
    border-bottom: 1px solid #c9c9c9;
}

.mode-button {
    width: 59px;
    height: 22px;
    display: flex;
    align-items: center;
    gap: 4px;
    padding-left: 5px;
    background: #d4d4d4;
    border-radius: 3px;
}

.editor-body {
    flex: 1;
    min-height: 0;
    display: flex;
}

.editor-left {
    flex: 1;
    min-width: 0;
    display: flex;
    flex-direction: column;
}

.editor-split {
    flex: 1;
    min-height: 0;
    display: flex;
}

.side-pane {
    width: 225px;
    flex: none;
    display: flex;
    flex-direction: column;
    border-right: 1px solid #c9c9c9;
}

.palette {
    height: 268px;
    flex: none;
    display: flex;
    flex-direction: column;
}

.palette-search {
    height: 28px;
    flex: none;
    display: flex;
    align-items: center;
    gap: 14px;
    padding: 0 7px 0 3px;
    border-bottom: 1px solid #d0d0d0;
}

.search-box {
    width: 166px;
    height: 21px;
    margin-right: 1px;
    display: flex;
    align-items: center;
    gap: 10px;
    padding: 0 6px 0 4px;
    background: #fff;
    border: 1px solid #c9c9c9;
    border-radius: 3px;
}

.search-box em {
    margin-left: auto;
    color: #a0a0a0;
    font-size: 15px;
}

.palette-lists {
    flex: 1;
    display: flex;
}

.palette-groups {
    width: 96px;
    border-right: 1px solid #c9c9c9;
}

.palette-groups li {
    height: 25px;
    display: flex;
    justify-content: space-between;
    align-items: center;
    padding: 0 3px 0 11px;
}

.palette-groups b {
    font-weight: 400;
    color: #777;
}

.palette-groups .current {
    background: #d4d4d4;
}

.palette-items {
    flex: 1;
    padding-top: 1px;
}

.palette-items li {
    height: 20px;
    display: flex;
    align-items: center;
    gap: 4px;
    padding-left: 11px;
}

.palette-items .current {
    background: #e2e2e2;
}

.ab {
    display: block;
    width: 14px;
    font-size: 11.500px;
    line-height: 11px;
    letter-spacing: 0;
    color: #98a3ae;
}

.ab-line {
    height: 13px;
    border-bottom: 2px solid #98a3ae;
}

.split-bar {
    height: 9px;
    flex: none;
    border-top: 1px solid #c9c9c9;
    border-bottom: 1px solid #c9c9c9;
}

.tree-head {
    height: 28px;
    flex: none;
    display: flex;
    align-items: center;
    gap: 14px;
    padding: 0 7px 0 5px;
    border-bottom: 1px solid #c9c9c9;
}

.tree-head span {
    margin-right: auto;
    letter-spacing: .1px;
}

.tree {
    flex: 1;
    display: flex;
    background: #fff;
}

.tree-list {
    flex: 1;
    border-right: 1px solid #c9c9c9;
}

.tree-list li {
    height: 20px;
    display: flex;
    align-items: center;
    padding: 0 5px 0 25px;
    white-space: nowrap;
}

.tree-list li .ab {
    margin-right: 5px;
}

.tree-list .tree-root {
    padding-left: 7px;
    gap: 4px;
}

.tree-list li svg:last-child {
    margin-left: auto;
}

.tree-list .tree-root svg:last-child {
    margin-left: 0;
}

.tree-list small {
    margin-left: 8px;
    font-size: 11px;
    color: #8c8c8c;
}

.btn-chip {
    width: 14px;
    height: 10px;
    margin-right: 5px;
    background: #9aa7b4;
    border-radius: 2px;
}

.tree-gutter {
    width: 26px;
}

/* design surface */
.design-main {
    flex: 1;
    min-width: 0;
    display: flex;
    flex-direction: column;
    overflow: hidden;
}

.design-tools {
    height: 29px;
    flex: none;
    display: grid;
    align-items: center;
    padding-left: 7px;
    border-bottom: 1px solid #d0d0d0;
    white-space: nowrap;
}

.design-tools.first {
    padding-bottom: 2px;
    grid-template-columns: 25px 8px 25px 14px 15px 49px 18px 38px 17px auto;
}

.design-tools.second {
    height: 28px;
    padding-left: 8px;
    grid-template-columns: 26px 23px 42px 8px 25px 25px 10px auto;
    border-bottom-color: #c9c9c9;
}

.chev {
    display: inline-block;
    width: 6px;
    height: 6px;
    margin: 0 0 2px 5px;
    border: solid #7a7a7a;
    border-width: 0 1px 1px 0;
    transform: rotate(45deg);
}

.margin-box {
    width: 35px;
    text-align: center;
    line-height: 13px;
    border-bottom: 1px solid #000;
    background:
        linear-gradient(#000, #000) left bottom / 1px 5px no-repeat,
        linear-gradient(#000, #000) right bottom / 1px 5px no-repeat;
}

.canvas {
    flex: 1;
    min-height: 0;
    display: flex;
    gap: 48px;
    padding: 50px 0 0 50px;
    background: #f5f5f5;
}

.preview {
    position: relative;
    flex: none;
    box-shadow: 0 0 3px rgba(0, 0, 0, .3);
    height: 384px;
}

.wrench {
    position: absolute;
    right: 8px;
    top: -22px;
}

.resize-grip {
    position: absolute;
    right: -21px;
    bottom: -21px;
}

.blueprint {
    position: relative;
    flex: none;
    width: 216px;
    height: 384px;
    background: #1d4d63;
    border: 2px solid #66b4d6;
}

.bp-arrow {
    position: absolute;
    left: -1px;
    width: 0;
    height: 0;
    border: 4px solid transparent;
    border-left: 6px solid #66b4d6;
}

.a1 { top: 22px; }
.a2 { top: 142px; }
.a3 { top: 194px; }
.a4 { top: 266px; }

.canvas-scroll {
    height: 8px;
    flex: none;
    background: #d9d9d9;
}

.design-status {
    height: 24px;
    flex: none;
    padding: 3px 0 0 66px;
    background: #f2f2f2;
    border-top: 1px solid #dcdcdc;
    color: #5a5a5a;
    white-space: nowrap;
}

.attributes {
    width: 300px;
    flex: none;
    display: flex;
    flex-direction: column;
    border-left: 1px solid #c9c9c9;
}

.attr-search {
    height: 28px;
    flex: none;
    display: flex;
    align-items: center;
    gap: 14px;
    padding-right: 10px;
    border-bottom: 1px solid #d0d0d0;
}

.attr-input {
    flex: 1;
    height: 21px;
    background: #fff;
    border: 1px solid #c9c9c9;
    border-radius: 3px;
}

.attr-title {
    height: 24px;
    flex: none;
    padding: 4px 5px 0 0;
    text-align: right;
    color: #9a9a9a;
    border-bottom: 1px solid #d0d0d0;
}

.attr-row {
    height: 24px;
    flex: none;
    display: flex;
    justify-content: flex-end;
    padding-right: 6px;
    padding-top: 3px;
    background: #fff;
    border-bottom: 1px solid #d8d8d8;
}

.attr-scroll {
    width: 6px;
    height: 16px;
    border: 1px solid #c9c9c9;
    border-radius: 3px;
}

.attr-body {
    flex: 1;
    display: flex;
    justify-content: flex-end;
    align-items: flex-end;
    padding: 0 7px 9px 0;
    background: #fafafa;
}

.attr-card {
    width: 280px;
    height: 39px;
    background: #f2f2f2;
    border: 1px solid #d8d8d8;
}

/* tool windows and status */
.tool-windows {
    height: 22px;
    flex: none;
    display: grid;
    grid-template-columns: 69px 62px 81px 63px 82px 77px 141px 1fr auto;
    align-items: center;
    padding: 3px 32px 0 33px;
    border-bottom: 1px solid #d8d8d8;
}

.tw {
    display: flex;
    align-items: center;
    gap: 4px;
    white-space: nowrap;
}

.tw-term,
.tw-build,
.tw-logcat,
.tw-db {
    gap: 5px;
}

.statusbar {
    height: 20px;
    flex: none;
    display: flex;
    align-items: center;
    gap: 9px;
    padding: 0 0 2px 5px;
}

/* the app that runs in both the preview and the emulator */
.login-screen {
    display: flex;
    flex-direction: column;
    background: linear-gradient(#fdcb00, #bf9900);
    padding: 0 calc(15 * var(--u)) 0 calc(14 * var(--u));
    font-family: Roboto, sans-serif;
    letter-spacing: 0;
    color: #000;
}

.login-screen.large {
    --u: 1px;
    width: 391px;
    height: 629px;
}

.login-screen.mini {
    --u: 0.552px;
    width: 216px;
    height: 384px;
}

.login-title {
    margin: calc(35 * var(--u)) 0 0 calc(12 * var(--u));
    height: calc(34 * var(--u));
    line-height: calc(34 * var(--u));
    font-size: calc(28 * var(--u));
    font-weight: 700;
}

.login-field {
    height: calc(48 * var(--u));
    display: flex;
    align-items: center;
    background: #fcc900;
    border: 1px solid #fff7d6;
    border-radius: calc(5 * var(--u));
    font-size: calc(17.500 * var(--u));
    color: #a48806;
}

.mini .login-field {
    border-color: #ffe680;
}

.login-field.first {
    margin-top: calc(171 * var(--u));
}

.login-field.second {
    margin-top: calc(50 * var(--u));
}

.mini .login-field.second {
    margin-top: 27px;
}

.large .login-field span {
    padding-top: 1px;
}

.mini .login-field span {
    margin-top: -1px;
}

.mail {
    width: calc(34 * var(--u));
    height: calc(28 * var(--u));
    margin: 0 calc(10 * var(--u));
}

.lock {
    width: calc(26 * var(--u));
    height: calc(32 * var(--u));
    margin: 0 calc(11 * var(--u)) 0 calc(10 * var(--u));
}

.cursor {
    width: 2px;
    height: 22px;
    margin-right: -1px;
    background: #1b8f78;
}

.login-button {
    height: calc(66 * var(--u));
    margin-top: calc(72 * var(--u));
    display: flex;
    align-items: center;
    justify-content: center;
    background: #000;
    border-radius: calc(4 * var(--u));
    box-shadow: 0 1px 2px rgba(0, 0, 0, .35);
    font-size: calc(19 * var(--u));
    font-weight: 700;
    color: #fff;
}

.login-exit {
    margin-top: 42px;
    line-height: calc(24 * var(--u));
    text-align: center;
    font-size: calc(18.500 * var(--u));
    font-weight: 700;
}

.mini .login-exit {
    margin-top: 43px;
}

/* emulator window */
.emulator {
    position: absolute;
    left: 839px;
    top: 0;
    width: 441px;
    height: 727px;
    display: flex;
    flex-direction: column;
    border-top: 1px solid #7a7a7a;
    background: #000;
}

.emu-titlebar {
    height: 30px;
    flex: none;
    display: flex;
    align-items: center;
    padding-left: 10px;
    background: #fff;
    color: #000;
    font-size: 12px;
    border-left: 1px solid #7a7a7a;
}

.emu-logo {
    color: #e0527f;
}

.emu-title {
    margin-left: 5px;
    white-space: nowrap;
}

.emu-controls {
    margin-left: auto;
    display: flex;
    gap: 35px;
    padding-right: 21px;
}

.emu-body {
    flex: 1;
    min-height: 0;
    display: flex;
    border-left: 1px solid #3a3a3a;
}

.phone {
    width: 391px;
    flex: none;
    display: flex;
    flex-direction: column;
}

.phone-status {
    height: 22px;
    flex: none;
    display: flex;
    align-items: center;
    justify-content: flex-end;
    padding-right: 11px;
    background: #3700b3;
    color: #fff;
    font-family: Roboto, sans-serif;
    font-size: 13.500px;
    font-weight: 500;
    letter-spacing: 0.1px;
}

.phone-status span {
    margin-left: 7px;
}

.ps-signal {
    margin-left: 3px;
}

.ps-batt {
    margin-left: 8px;
}

.phone-nav {
    position: relative;
    flex: 1;
    background: #000;
}

.watermark {
    position: absolute;
    left: 1px;
    top: 0;
    font-family: "Open Sans", sans-serif;
    font-size: 40px;
    line-height: 44px;
    letter-spacing: -0.4px;
    color: #9b9b9b;
    white-space: nowrap;
}

.nav-keys {
    position: absolute;
    left: 76px;
    top: 14px;
    display: flex;
    gap: 92px;
}

.emu-side {
    width: 48px;
    flex: none;
    height: 669px;
    background: #111;
    border-right: 1px solid #8a8a8a;
    box-sizing: content-box;
    display: flex;
    flex-direction: column;
    overflow: hidden;
}

.side-btn {
    height: 48px;
    flex: none;
    display: flex;
    align-items: center;
    justify-content: center;
}

.side-gps {
    padding-bottom: 2px;
}

.side-last {
    align-items: flex-start;
    padding-top: 16px;
}

.side-divider {
    height: 1px;
    flex: none;
    margin: 0 8px;
    background: #6e6e6e;
}

.side-gap {
    height: 46px;
    flex: none;
}

.dark-popup {
    position: absolute;
    left: 1240px;
    top: 701px;
    width: 126px;
    height: 26px;
    background: #222;
}

.dark-popup i {
    position: absolute;
    right: 0;
    bottom: 0;
    width: 54px;
    height: 3px;
    background: #fff;
}

.balloon {
    position: absolute;
    left: 563px;
    top: 638px;
    width: 136px;
    height: 47px;
    padding: 7px 0 0 11px;
    background: #baedba;
    border: 1px solid #9bc99b;
    border-radius: 3px;
    box-shadow: 0 3px 8px rgba(0, 0, 0, .25);
    line-height: 16px;
    color: #1c1c1c;
}

.balloon::after {
    content: "";
    position: absolute;
    left: 62px;
    bottom: -8px;
    border: 7px solid transparent;
    border-top: 8px solid #baedba;
    border-bottom: 0;
}

/* windows taskbar */
.taskbar {
    height: 41px;
    flex: none;
    display: flex;
    align-items: stretch;
    background: linear-gradient(90deg, #1c1a1c, #2b2423 55%, #2a2322);
    color: #fff;
}

.task-left {
    width: 194px;
    flex: none;
    display: grid;
    grid-template-columns: 46px 50px 48px 47px;
    justify-items: center;
    align-items: center;
}

.task-apps {
    display: flex;
}

.app {
    width: 49px;
    display: flex;
    align-items: center;
    justify-content: center;
    padding-bottom: 2px;
}

.app.running {
    background: linear-gradient(#76b9ed, #76b9ed) center bottom / 40px 2px no-repeat;
}

.app.current {
    background: linear-gradient(#76b9ed, #76b9ed) center bottom / 48px 2px no-repeat, #4f4542;
}

.oo-badge,
.zalo,
.zoom,
.studio {
    width: 24px;
    height: 26px;
    display: flex;
    align-items: center;
    justify-content: center;
    border-radius: 50%;
}

.oo-badge.pink {
    background: #e3245f;
    color: #fff;
}

.oo-badge.white {
    background: #fff;
    color: #d93468;
}

.zalo {
    border-radius: 8px;
    background: #fff;
    color: #0a68d8;
    font-family: "Liberation Sans", sans-serif;
    font-size: 10px;
    letter-spacing: 0;
}

.zoom {
    border-radius: 8px;
    background: #2d8cff;
}

.studio {
    background: #fff;
}

.tray {
    margin-left: auto;
    width: 250px;
    flex: none;
    display: grid;
    grid-template-columns: 26px 23px 23px 27px 31px 66px 40px 8px 1fr;
    justify-items: center;
    align-items: center;
}

.tray::after {
    content: "";
    grid-column: 9;
    justify-self: start;
    width: 1px;
    height: 100%;
    background: #5a5250;
}

.tray-lang {
    font-size: 12px;
}

.clock {
    display: flex;
    flex-direction: column;
    align-items: center;
    gap: 3px;
    font-size: 12px;
    line-height: 16px;
}

.notify {
    position: relative;
}

.notify b {
    position: absolute;
    left: 7px;
    top: 5px;
    width: 16px;
    height: 16px;
    text-align: center;
    line-height: 14px;
    font-weight: 600;
    font-size: 11px;
    background: #2a2322;
    border: 1px solid #ccc;
    border-radius: 50%;
}
```
